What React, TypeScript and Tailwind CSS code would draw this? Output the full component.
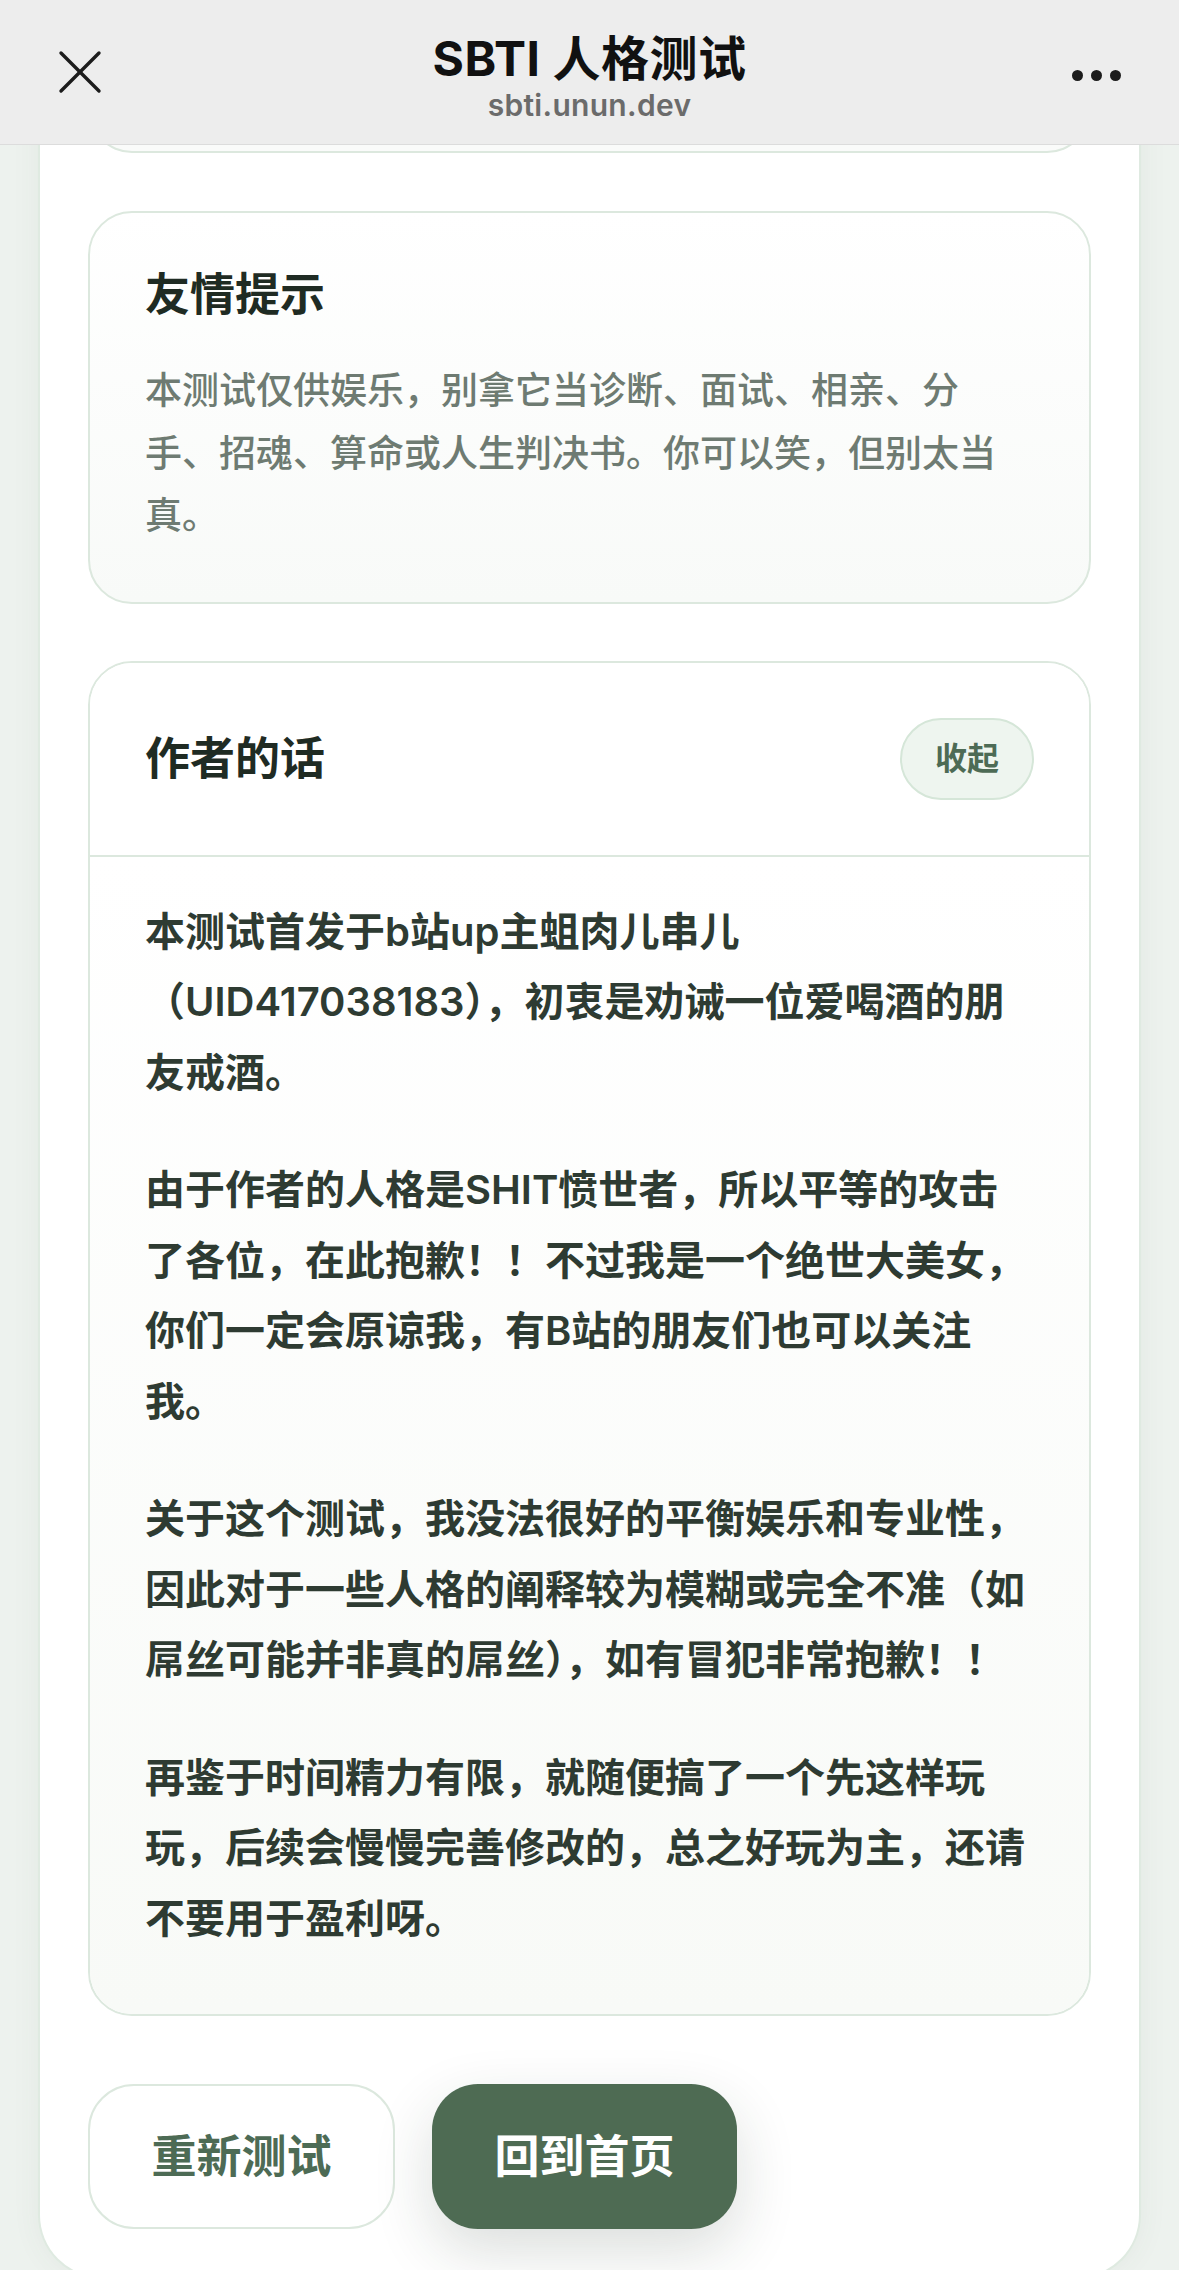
import React from 'react';

const tipLines = ['本测试仅供娱乐，别拿它当诊断、面试、相亲、分', '手、招魂、算命或人生判决书。你可以笑，但别太当', '真。'];

const authorNotes: string[][] = [
  ['本测试首发于b站up主蛆肉儿串儿', '（UID417038183），初衷是劝诫一位爱喝酒的朋', '友戒酒。'],
  [
    '由于作者的人格是SHIT愤世者，所以平等的攻击',
    '了各位，在此抱歉！！不过我是一个绝世大美女，',
    '你们一定会原谅我，有B站的朋友们也可以关注',
    '我。',
  ],
  [
    '关于这个测试，我没法很好的平衡娱乐和专业性，',
    '因此对于一些人格的阐释较为模糊或完全不准（如',
    '屌丝可能并非真的屌丝），如有冒犯非常抱歉！！',
  ],
  [
    '再鉴于时间精力有限，就随便搞了一个先这样玩',
    '玩，后续会慢慢完善修改的，总之好玩为主，还请',
    '不要用于盈利呀。',
  ],
];

function Lines({ lines }: { lines: string[] }) {
  return (
    <>
      {lines.map((line, j) => (
        <React.Fragment key={j}>
          {line}
          {j < lines.length - 1 && <br />}
        </React.Fragment>
      ))}
    </>
  );
}

function TopBar() {
  return (
    <header className="relative z-10 grid h-[145px] grid-cols-[1fr_auto_1fr] items-center border-b border-[#dcdcdc] bg-[#ededed] px-[58px]">
      {/* close */}
      <div className="flex items-center">
        <svg width="44" height="44" viewBox="0 0 44 44" fill="none" stroke="#1c1c1c" strokeWidth="3.4" strokeLinecap="round">
          <path d="M3 3 L41 41" />
          <path d="M41 3 L3 41" />
        </svg>
      </div>

      <div className="flex flex-col items-center pt-[10px]">
        <h1 className="text-[48px] font-bold leading-[56px] tracking-[0.5px] text-[#111]">SBTI 人格测试</h1>
        <p className="text-[30px] font-semibold leading-[36px] tracking-[0.3px] text-[#6b6b6b]">sbti.unun.dev</p>
      </div>

      {/* more */}
      <div className="flex items-center justify-end gap-[8px] pt-[6px]">
        <span className="h-[11px] w-[11px] rounded-full bg-[#1c1c1c]" />
        <span className="h-[11px] w-[11px] rounded-full bg-[#1c1c1c]" />
        <span className="h-[11px] w-[11px] rounded-full bg-[#1c1c1c]" />
      </div>
    </header>
  );
}

export default function App() {
  return (
    <div className="relative h-[2270px] w-[1179px] overflow-hidden bg-[#edf2ee] font-[Inter,'Noto_Sans_CJK_SC',sans-serif]">
      <TopBar />

      <main className="mx-[38px] -mt-[80px] rounded-b-[64px] border-2 border-t-0 border-[#dfeae1] bg-white px-[48px] pb-[48px] shadow-[0_0_30px_rgba(60,90,70,0.06)]">
        {/* tail of the card above */}
        <div className="h-[88px] rounded-b-[44px] border-2 border-t-0 border-[#dce8de] bg-[#fafbfa]" />

        {/* Tips */}
        <section className="mt-[58px] rounded-[44px] border-2 border-[#dce8de] bg-gradient-to-b from-white to-[#f8faf8] px-[55px] pb-[54px] pt-[53px]">
          <h2 className="text-[45px] font-bold leading-[58px] text-[#1f2b23]">友情提示</h2>
          <p className="mt-[36px] text-[37px] font-medium leading-[62.5px] text-[#6e7b72]">
            <Lines lines={tipLines} />
          </p>
        </section>

        {/* Author notes */}
        <section className="mt-[57px] overflow-hidden rounded-[44px] border-2 border-[#dce8de]">
          <div className="flex items-center justify-between border-b-2 border-[#dce8de] bg-white px-[55px] py-[55px]">
            <h2 className="text-[45px] font-bold leading-[58px] text-[#1f2b23]">作者的话</h2>
            <button className="flex h-[82px] w-[134px] items-center justify-center rounded-full border-2 border-[#d5e6d8] bg-[#eef5ef] text-[32px] font-semibold text-[#4d6b55]">
              收起
            </button>
          </div>
          <div className="space-y-[47px] bg-gradient-to-b from-white to-[#f8faf7] px-[55px] pb-[60px] pt-[40px]">
            {authorNotes.map((lines, i) => (
              <p key={i} className="text-[40px] font-semibold leading-[70.5px] text-[#2e3b32]">
                <Lines lines={lines} />
              </p>
            ))}
          </div>
        </section>

        {/* Actions */}
        <div className="mt-[68px] flex gap-[37px]">
          <button className="flex h-[145px] w-[307px] items-center justify-center rounded-[46px] border-2 border-[#dce8de] bg-white text-[45px] font-bold text-[#4d6b55]">
            重新测试
          </button>
          <button className="flex h-[145px] w-[305px] items-center justify-center rounded-[46px] bg-[#4e6b53] text-[45px] font-bold text-white shadow-[0_22px_60px_rgba(30,50,35,0.16)]">
            回到首页
          </button>
        </div>
      </main>
    </div>
  );
}
